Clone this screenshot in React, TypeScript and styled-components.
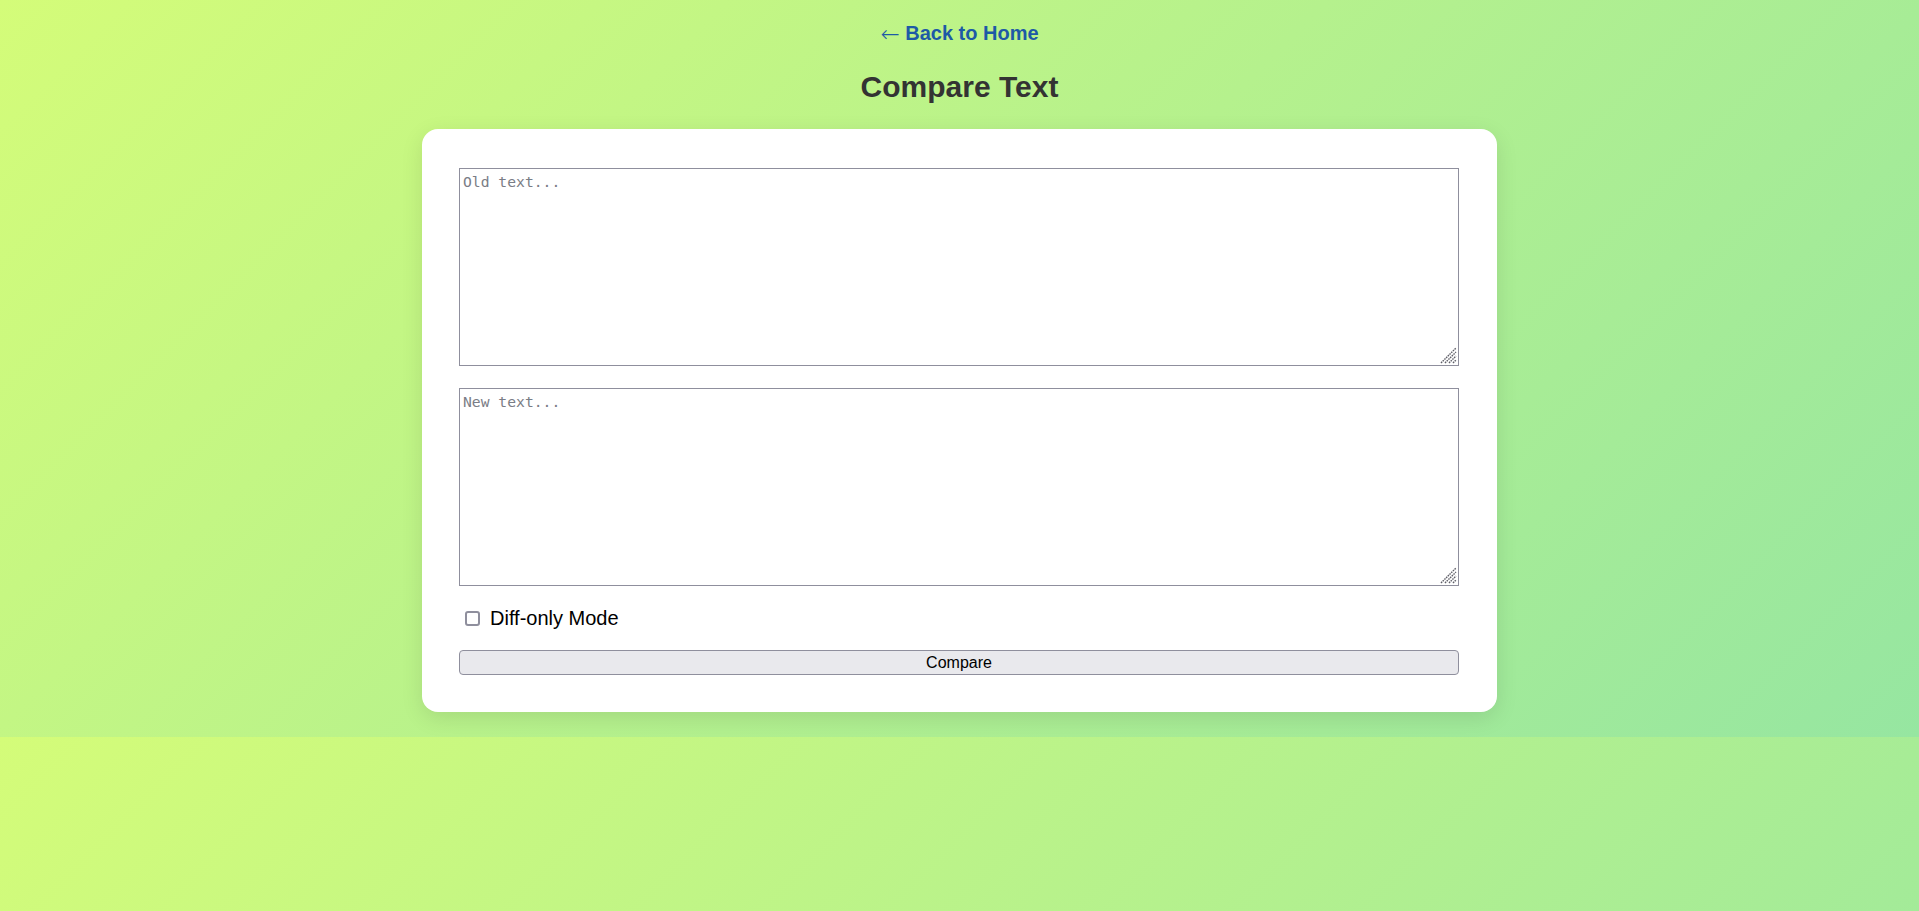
import React, { useState } from "react";
import styled, { createGlobalStyle } from "styled-components";

const GlobalStyle = createGlobalStyle`
  html, body {
    margin: 0;
    padding: 0;
  }
  body {
    background: linear-gradient(135deg, #d4fc79 0%, #96e6a1 100%);
    font-family: "Liberation Sans", Arial, sans-serif;
  }
`;

const Page = styled.div`
  display: flex;
  flex-direction: column;
  align-items: center;
  padding: 22px 0 25px;
`;

const BackLink = styled.a`
  display: block;
  font-size: 20px;
  font-weight: bold;
  color: #1d5aa6;
  text-decoration: none;
  line-height: 23px;
`;

const Arrow = styled.span`
  font-family: "DejaVu Sans", sans-serif;
  font-weight: 200;
  font-size: 23px;
  line-height: 20px;
  vertical-align: -2px;
`;

const Title = styled.h1`
  margin: 25px 0 25px;
  font-size: 30px;
  font-weight: bold;
  color: #333;
  line-height: 34px;
`;

const Card = styled.div`
  box-sizing: border-box;
  width: 1075px;
  padding: 39px 37px 37px 37px;
  background: #fff;
  border-radius: 16px;
  box-shadow: 0 6px 22px rgba(0, 0, 0, 0.1);
  display: flex;
  flex-direction: column;
`;

const FieldWrap = styled.div<{ $gap: number }>`
  position: relative;
  width: 1000px;
  height: 198px;
  margin: 0 0 ${(p) => p.$gap}px 0;
`;

const TextArea = styled.textarea`
  box-sizing: border-box;
  display: block;
  width: 100%;
  height: 100%;
  margin: 0;
  padding: 4px 3px;
  border: 1px solid #8f8f9d;
  font-family: "DejaVu Sans Mono", "Liberation Mono", monospace;
  font-size: 14.7px;
  line-height: 17px;
  color: #000;
  background: #fff;
  resize: none;
  &::placeholder {
    color: #7a7d86;
  }
`;

const Grip = styled.svg`
  position: absolute;
  right: 2px;
  bottom: 2px;
  width: 17px;
  height: 17px;
  pointer-events: none;
`;

const CheckRow = styled.label`
  display: flex;
  align-items: center;
  height: 23px;
  margin: 0 0 20px 0;
  font-size: 20px;
  color: #000;
  cursor: pointer;
`;

const Check = styled.input`
  appearance: none;
  box-sizing: border-box;
  width: 15px;
  height: 15px;
  margin: 0 10px 0 6px;
  border: 2px solid #8f8f9d;
  border-radius: 3px;
  background: #fff;
  &:checked {
    background: #0060df;
    border-color: #0060df;
  }
`;

const Button = styled.button`
  box-sizing: border-box;
  width: 1000px;
  height: 25px;
  padding: 0;
  border: 1px solid #8f8f9d;
  border-radius: 4px;
  background: #e9e9ed;
  font-family: "Liberation Sans", Arial, sans-serif;
  font-size: 16px;
  color: #000;
  cursor: pointer;
`;

function ResizeGrip() {
  return (
    <Grip viewBox="0 0 17 17">
      <g stroke="#5f5f68" strokeWidth="1.4" strokeDasharray="1.6 0.8">
        <line x1="1" y1="16" x2="16" y2="1" />
        <line x1="5" y1="16" x2="16" y2="5" />
        <line x1="9" y1="16" x2="16" y2="9" />
        <line x1="13" y1="16" x2="16" y2="13" />
      </g>
    </Grip>
  );
}

export default function App() {
  const [oldText, setOldText] = useState("");
  const [newText, setNewText] = useState("");
  const [diffOnly, setDiffOnly] = useState(false);
  return (
    <>
      <GlobalStyle />
      <Page>
        <BackLink href="#">
          <Arrow>←</Arrow> Back to Home
        </BackLink>
        <Title>Compare Text</Title>
        <Card>
          <FieldWrap $gap={22}>
            <TextArea
              placeholder="Old text..."
              value={oldText}
              onChange={(e) => setOldText(e.target.value)}
            />
            <ResizeGrip />
          </FieldWrap>
          <FieldWrap $gap={21}>
            <TextArea
              placeholder="New text..."
              value={newText}
              onChange={(e) => setNewText(e.target.value)}
            />
            <ResizeGrip />
          </FieldWrap>
          <CheckRow>
            <Check
              type="checkbox"
              checked={diffOnly}
              onChange={(e) => setDiffOnly(e.target.checked)}
            />
            Diff-only Mode
          </CheckRow>
          <Button>Compare</Button>
        </Card>
      </Page>
    </>
  );
}
